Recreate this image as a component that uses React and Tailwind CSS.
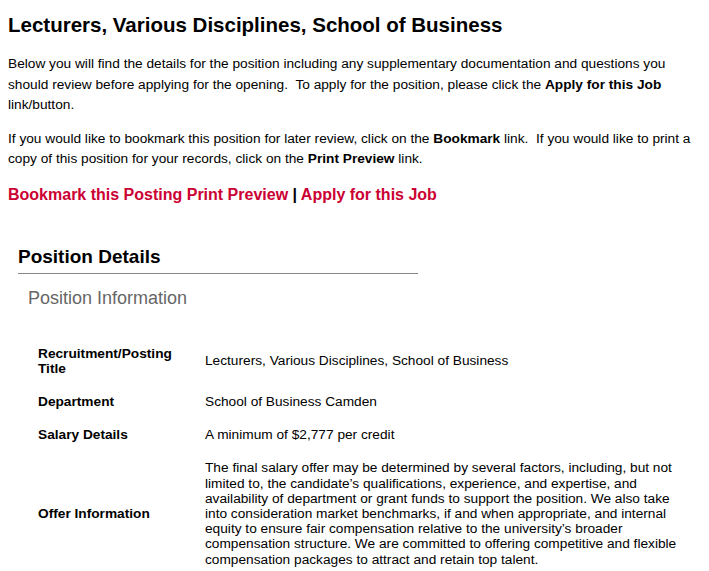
export default function App() {
	const rows = [
		{ label: "Recruitment/Posting Title", value: "Lecturers, Various Disciplines, School of Business" },
		{ label: "Department", value: "School of Business Camden" },
		{ label: "Salary Details", value: "A minimum of $2,777 per credit" },
		{
			label: "Offer Information",
			value:
				"The final salary offer may be determined by several factors, including, but not limited to, the candidate’s qualifications, experience, and expertise, and availability of department or grant funds to support the position. We also take into consideration market benchmarks, if and when appropriate, and internal equity to ensure fair compensation relative to the university’s broader compensation structure. We are committed to offering competitive and flexible compensation packages to attract and retain top talent.",
		},
	];

	return (
		<div className="bg-white text-black px-2 pt-[12px] font-['Liberation_Sans',Arial,sans-serif]">
			<h1 className="text-[20.5px] font-bold leading-[26px]">
				Lecturers, Various Disciplines, School of Business
			</h1>
			<p className="mt-[16px] text-[13.7px] leading-[20.5px]">
				Below you will find the details for the position including any supplementary documentation and
				questions you should review before applying for the opening.&nbsp; To apply for the position,
				please click the <b>Apply for this Job</b> link/button.
			</p>
			<p className="mt-[13px] text-[13.7px] leading-[20.5px]">
				If you would like to bookmark this position for later review, click on the <b>Bookmark</b> link.&nbsp;
				If you would like to print a copy of this position for your records, click on the{" "}
				<b>Print Preview</b> link.
			</p>
			<div className="mt-[15px] text-[16px] font-bold leading-[20px]">
				<a className="text-[#cc0033]">Bookmark this Posting</a>{" "}
				<a className="text-[#cc0033]">Print Preview</a> | <a className="text-[#cc0033]">Apply for this Job</a>
			</div>

			<div className="mt-[40px] pl-[10px]">
				<h2 className="text-[19px] font-bold leading-[24px] w-[400px] border-b border-[#888] pb-[4px]">
					Position Details
				</h2>
				<h3 className="mt-[12px] pl-[10px] text-[18px] leading-[24px] text-[#666]">Position Information</h3>
				<table className="mt-[27px] ml-[10px] text-[13.7px] leading-[15.2px]">
					<tbody>
						{rows.map(r => (
							<tr key={r.label}>
								<th
									scope="row"
									className="w-[177px] pl-[10px] pr-[10px] py-[9px] text-left font-bold align-middle"
								>
									<div className="w-[140px]">{r.label}</div>
								</th>
								<td className="py-[9px] align-middle w-[476px]">{r.value}</td>
							</tr>
						))}
					</tbody>
				</table>
			</div>
		</div>
	);
}
